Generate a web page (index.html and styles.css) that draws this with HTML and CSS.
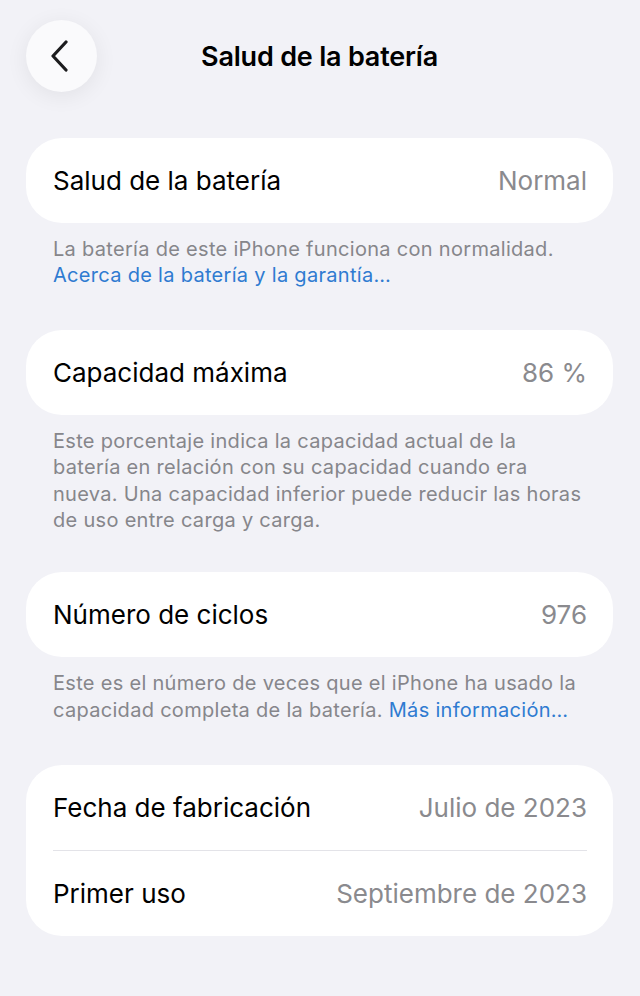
FILE: index.html
```html
<!DOCTYPE html>
<html lang="es">
<head>
<meta charset="utf-8">
<title>Salud de la batería</title>
<link rel="stylesheet" href="styles.css">
</head>
<body>
<div class="page">
  <header class="nav">
    <button class="back" aria-label="Atrás">
      <svg width="22" height="32" viewBox="0 0 22 32" aria-hidden="true">
        <path d="M17 2 L4 16 L17 30" fill="none" stroke="#1c1c1e" stroke-width="3.2" stroke-linecap="round" stroke-linejoin="round"/>
      </svg>
    </button>
    <h1 class="title">Salud de la batería</h1>
    <span class="spacer"></span>
  </header>

  <section class="group g1">
    <div class="card">
      <div class="row"><span class="label">Salud de la batería</span><span class="value">Normal</span></div>
    </div>
    <p class="footer">La batería de este iPhone funciona con normalidad.<br><a class="link" href="#">Acerca de la batería y la garantía…</a></p>
  </section>

  <section class="group g2">
    <div class="card">
      <div class="row"><span class="label">Capacidad máxima</span><span class="value">86 %</span></div>
    </div>
    <p class="footer">Este porcentaje indica la capacidad actual de la<br>batería en relación con su capacidad cuando era<br>nueva. Una capacidad inferior puede reducir las horas<br>de uso entre carga y carga.</p>
  </section>

  <section class="group g3">
    <div class="card">
      <div class="row"><span class="label">Número de ciclos</span><span class="value">976</span></div>
    </div>
    <p class="footer">Este es el número de veces que el iPhone ha usado la<br>capacidad completa de la batería. <a class="link" href="#">Más información…</a></p>
  </section>

  <section class="group g4">
    <div class="card">
      <div class="row"><span class="label">Fecha de fabricación</span><span class="value">Julio de 2023</span></div>
      <div class="row"><span class="label">Primer uso</span><span class="value">Septiembre de 2023</span></div>
    </div>
  </section>
</div>
</body>
</html>
```

FILE: styles.css
```css
html, body {
  margin: 0;
  background: #f2f2f7;
}

body {
  font-family: Inter, "Noto Sans", "Liberation Sans", sans-serif;
  color: #000;
  -webkit-font-smoothing: antialiased;
}

.page {
  padding: 20px 27px 0 26px;
  display: flex;
  flex-direction: column;
}

.nav {
  display: grid;
  grid-template-columns: 71px 1fr 71px;
  align-items: center;
  height: 72px;
}

.back {
  width: 71px;
  height: 72px;
  border: none;
  border-radius: 50%;
  background: #fafafc;
  box-shadow: 0 4px 22px rgba(0, 0, 0, 0.07);
  display: flex;
  align-items: center;
  justify-content: center;
  padding: 0 4px 0 0;
  cursor: pointer;
}

.title {
  margin: 0;
  text-align: center;
  font-size: 27px;
  font-weight: 600;
  letter-spacing: -0.2px;
}

.group {
  display: flex;
  flex-direction: column;
}

.g1 { margin-top: 46px; }
.g2 { margin-top: 41px; }
.g3 { margin-top: 39px; }
.g4 { margin-top: 42px; }

.card {
  background: #fff;
  border-radius: 36px;
  padding: 0 26px 0 27px;
}

.row {
  height: 85px;
  display: flex;
  align-items: center;
  justify-content: space-between;
  font-size: 26px;
  letter-spacing: 0;
}

.row + .row {
  border-top: 1.5px solid #e3e3e8;
}

.value {
  color: #8a8a8e;
}

.footer {
  margin: 13px 0 0;
  padding: 0 0 0 27px;
  font-size: 20px;
  line-height: 26.4px;
  color: #86868b;
  letter-spacing: 0.3px;
}

.link {
  color: #2f7bd1;
  text-decoration: none;
}
```
